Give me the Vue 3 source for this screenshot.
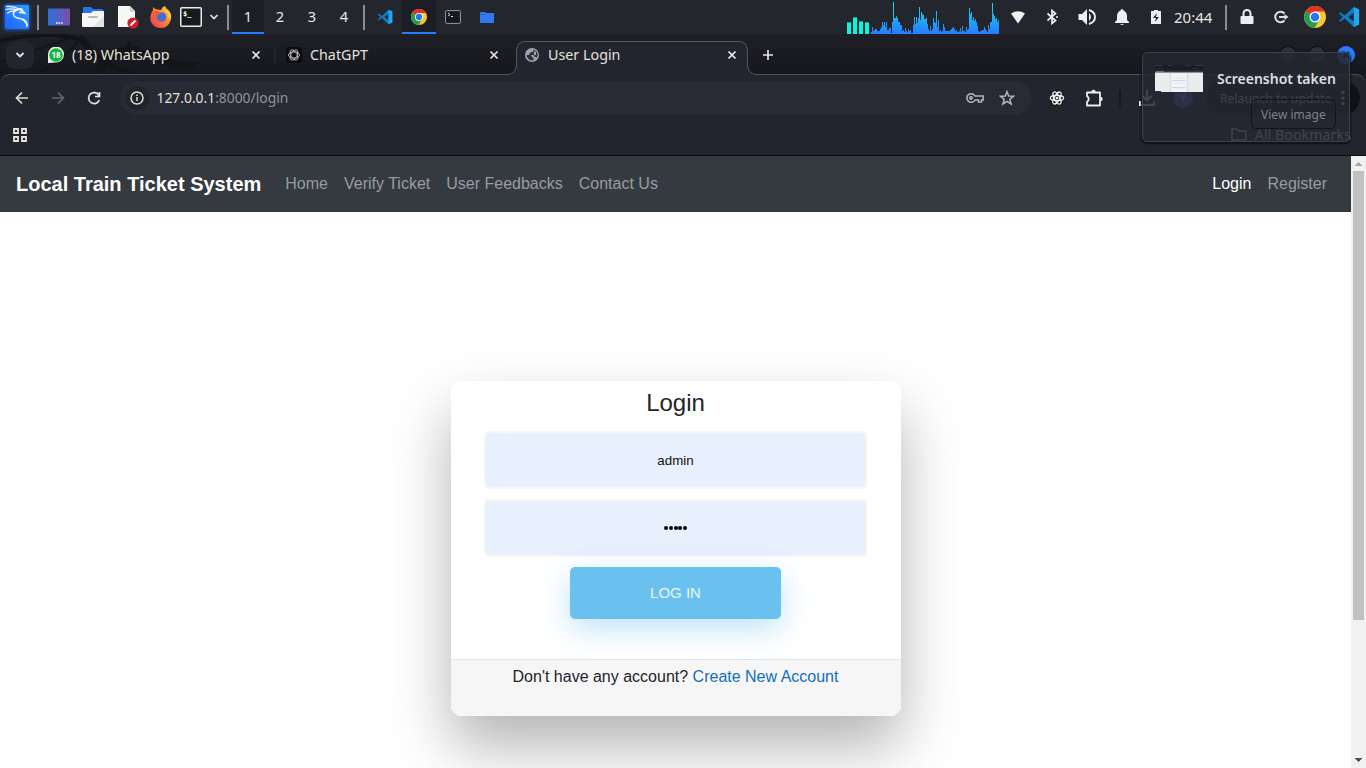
<script setup>
const cores = [12, 17, 13, 12]
const graph = [
  2, 7, 3, 4, 5, 5, 3, 3, 3, 5, 7, 12, 9, 12, 7, 12, 4, 4, 6, 6, 1, 12, 32, 16, 16, 18, 16, 12, 12, 9, 9,
  3, 4, 2, 6, 3, 2, 5, 3, 4, 1, 1, 9, 17, 10, 17, 11, 16, 27, 14, 22, 20, 19, 15, 15, 16, 10, 5, 3, 8, 3, 5,
  16, 12, 11, 23, 7, 14, 3, 4, 2, 3, 10, 7, 3, 3, 3, 3, 3, 4, 5, 6, 7, 5, 3, 4, 2, 2, 3, 6, 2, 8, 3, 3, 2, 7,
  4, 5, 26, 20, 22, 14, 17, 13, 15, 12, 8, 3, 2, 3, 3, 4, 4, 7, 5, 3, 2, 9, 5, 12, 12, 31, 20, 18, 15, 16, 12, 14
]
const graphPath = 'M0 34' + graph.map((h, i) => `V${34 - h}H${i + 1}`).join('') + 'V34Z'
const links = ['Home', 'Verify Ticket', 'User Feedbacks', 'Contact Us']
</script>

<template>
  <div class="screen">
    <svg class="defs" width="0" height="0">
      <defs>
        <linearGradient id="load" x1="0" y1="0" x2="0" y2="34" gradientUnits="userSpaceOnUse"><stop stop-color="#13e9e8" /><stop offset="1" stop-color="#277bff" /></linearGradient>
        <linearGradient id="desk" x1="0" y1="0" x2="1" y2="0"><stop stop-color="#2d70dd" /><stop offset="1" stop-color="#7950a6" /></linearGradient>
        <linearGradient id="fox" x1="1" y1="0" x2="0" y2="1"><stop stop-color="#ffe34a" /><stop offset=".45" stop-color="#ff8a2a" /><stop offset="1" stop-color="#f02b61" /></linearGradient>
        <linearGradient id="kali" x1="0" y1="1" x2="1" y2="0"><stop stop-color="#1e62ff" /><stop offset="1" stop-color="#2d9dff" /></linearGradient>
      </defs>
      <symbol id="chrome" viewBox="0 0 22 22">
        <circle cx="11" cy="11" r="11" fill="#fbc52d" />
        <path d="M11 11 1.500 5.500A11 11 0 0 1 20.500 5.500H11Z" fill="#df3128" />
        <path d="M11 11 1.500 5.500A11 11 0 0 0 10.500 22L15.700 13.500Z" fill="#249d50" />
        <circle cx="11" cy="11" r="5.500" fill="#fff" /><circle cx="11" cy="11" r="4.300" fill="#2677ef" />
      </symbol>
      <symbol id="vscode" viewBox="0 0 24 24">
        <path d="M17.300 1 23 3.700v16.600L17.300 23l-10-9.400-4.600 3.600L1 16l4.300-4L1 8l1.700-1.200 4.600 3.600ZM17.300 7 11 12l6.300 5Z" fill="#087ecb" fill-rule="evenodd" />
        <path d="M17.300 1 23 3.700v16.600L17.300 23Z" fill="#25a5ee" />
      </symbol>
    </svg>

    <header class="panel">
      <span class="cell"><svg width="34" height="34" viewBox="0 0 34 34"><rect x="2" y="2" width="30" height="30" rx="5" fill="#164995" opacity=".25" /><rect x="3.500" y="3.500" width="27" height="27" rx="4" fill="#1b5ac8" opacity=".5" /><rect x="5" y="5" width="24" height="24" rx="2" fill="url(#kali)" /><g fill="none" stroke="#f4f9ff" stroke-linecap="round"><path d="M6.500 6.500Q14 6 20 9.500M6 9.500Q12 8 17 10M7.500 13Q11 10.500 16 11" stroke-width="1.200" /><path d="M19.500 9.500q3 .5 5 3.500-3-.8-5-.5M17 10q-4 1-3.500 4.500.5 3.200 6 4 5 .5 6.500 3.500 1.200 2.200 1 4M17 10q3-2 5-.5" stroke-width="1.700" /><path d="M22 19.500q3 1.500 3.500 3.500" stroke-width="1" /></g></svg></span>
      <i class="divider"></i>
      <span class="cell"><svg width="22" height="18"><rect y=".5" width="22" height="17" rx="1" fill="url(#desk)" /><path d="M8 15h1.500m1 0H12m1 0h1.500" stroke="#fff" stroke-width="1.300" /></svg></span>
      <span class="cell"><svg width="24" height="22"><path d="M2 2q0-1 1-1h7l2 2h9q1 0 1 1v8H2Z" fill="#2673e8" /><path d="M1 7h9l2-2h11v15q0 1-1 1H2q-1 0-1-1Z" fill="#f5f5f4" /><path d="M12 21 23 10v11Z" fill="#e3e3e2" /><rect x="7" y="10" width="10" height="2" rx="1" fill="#b9b9b9" /></svg></span>
      <span class="cell"><svg width="24" height="24"><path d="M3 1h12l5 5v15q0 1-1 1H3Z" fill="#f7f7f7" /><path d="m14 1 6 6h-5Z" fill="#ccc" /><circle cx="18" cy="18" r="5.600" fill="#d21e26" /><path d="m15.500 20.500 5-5" stroke="#fff" stroke-width="1.800" /></svg></span>
      <span class="cell"><svg width="24" height="24"><path d="M12 5q1-3 4-4 1 3 4 5 4 5 1 11-3 6-9 6Q5 23 2 17 0 11 4 5l0-3q2 2 4 2.500Z" fill="url(#fox)" /><circle cx="12.500" cy="12" r="4.800" fill="#486bd9" /><path d="M4 6q5-1 8 2.500l-3 1q-3 2 0 5-5 0-5-4Z" fill="#f55936" /><path d="M15 6q5 1 4 7l3-1q0-5-4-8Z" fill="#ffc643" /></svg></span>
      <span class="cell wide"><svg width="22" height="20"><rect x=".75" y=".75" width="20.500" height="18.500" rx="1" fill="#18191a" stroke="#ececec" stroke-width="1.500" /><text x="3" y="9" font-family="DejaVu Sans Mono, monospace" font-weight="700" font-size="7" fill="#fff">$_</text></svg><svg width="10" height="8"><path d="m1.500 2 3.500 3.500L8.500 2" fill="none" stroke="#e5e5e5" stroke-width="1.700" /></svg></span>
      <i class="divider"></i>
      <span class="work on">1</span><span class="work">2</span><span class="work">3</span><span class="work">4</span>
      <i class="divider"></i>
      <span class="cell"><svg width="16" height="16"><use href="#vscode" /></svg></span>
      <span class="cell on"><svg width="16" height="16"><use href="#chrome" /></svg></span>
      <span class="cell"><svg width="16" height="14"><rect x=".6" y=".6" width="14.800" height="12.800" rx="1" fill="#17181b" stroke="#999" /><path d="m3 3 2 1.500L3 6m3 .5h2" fill="none" stroke="#ddd" /></svg></span>
      <span class="cell"><svg width="16" height="14"><path d="M1 3q0-1 1-1h4l1 1h7q1 0 1 1v8q0 1-1 1H2q-1 0-1-1Z" fill="#3279ef" /><path d="M1 4.500h5l1-1" fill="none" stroke="#1d5dc8" stroke-width=".7" /></svg></span>
      <div class="meters">
        <i v-for="(c, i) in cores" :key="i" class="core" :style="{ height: c + 'px' }"></i>
      </div>
      <svg class="graph" width="128" height="34" shape-rendering="crispEdges"><path :d="graphPath" fill="url(#load)" /></svg>
      <span class="cell"><svg width="16" height="14"><path d="M1 3.500Q8-1 15 3.500L8 13.500Z" fill="#f0f0ee" /></svg></span>
      <span class="cell"><svg width="14" height="18"><path d="m2.500 5.500 8 7L7 15.500v-13l3.500 3-8 7" fill="none" stroke="#eee" stroke-width="1.700" /><circle cx="12" cy="9" r="1" fill="#eee" /></svg></span>
      <span class="cell vol"><svg width="20" height="18"><path d="M1.500 6H5l5-5v16l-5-5H1.500Z" fill="#eee" /><path d="M12 5q4 4 0 8Z" fill="#eee" /><path d="M12 2q6 2 6 7t-6 7" fill="none" stroke="#eee" stroke-width="1.900" /></svg></span>
      <span class="cell"><svg width="16" height="18"><path d="M8 1q1.500 0 1.500 1.500Q13 4 13 8v4l2 2v1H1v-1l2-2V8q0-4 3.500-5.500Q6.500 1 8 1ZM6 16h4q-2 2-4 0Z" fill="#eee" /></svg></span>
      <span class="cell"><svg width="12" height="16"><path d="M1 2h3V1h4v1h3v13H1Z" fill="#eee" /><path d="M7 4 3 9h3l-1 4 4-5H6Z" fill="#24262d" /></svg></span>
      <span class="clock">20:44</span>
      <i class="divider"></i>
      <span class="cell"><svg width="14" height="16"><path d="M3.500 7V4.500a3.500 3.500 0 0 1 7 0V7" fill="none" stroke="#eee" stroke-width="2" /><rect x=".5" y="7" width="13" height="8" rx="1" fill="#eee" /></svg></span>
      <span class="cell"><svg width="16" height="14"><path d="M11.500 3.500A5.300 5.300 0 1 0 11.500 10.500" fill="none" stroke="#ddd" stroke-width="2" /><path d="M6 7h6" stroke="#ddd" stroke-width="2" /><path d="m11.500 4 4 3-4 3Z" fill="#ddd" /></svg></span>
      <span class="cell"><svg width="22" height="22"><use href="#chrome" /></svg></span>
      <span class="cell"><svg width="22" height="22"><use href="#vscode" /></svg></span>
    </header>

    <section class="browser">
      <div class="tabs">
        <svg class="dragon" width="220" height="40"><g fill="none" stroke="#131418"><path d="M0 7Q28 0 54 1T90 15Q110 36 134 38" stroke-width="4" /><path d="M0 28Q45 13 76 2M38 39Q62 28 81 4" stroke-width="2" /><path d="M80 2 97 24" stroke-width="5" /></g><path d="M94 39q6-24 31-26l5-6 2 6 8-1-3 4 17 1-6 2 27 7q18 5 26 1l-8 7-12-2 1 3q-22-3-35-11-37-8-44 15Z" fill="#131418" /></svg>
        <button class="search"><svg width="10" height="8"><path d="m1.500 2 3.500 3.500L8.500 2" fill="none" stroke="#e6e4e1" stroke-width="1.800" /></svg></button>
        <div class="tab first">
          <svg width="16" height="16"><path d="M0 16V7A8 8 0 1 1 8 15.500Z" fill="#eee" /><circle cx="8" cy="8" r="6.800" fill="#14b83d" /><text x="8" y="11" text-anchor="middle" font-family="Noto Sans, sans-serif" font-weight="700" font-size="8" fill="#fff">18</text></svg>
          <span>(18) WhatsApp</span><svg class="close" width="10" height="10"><path d="m1.500 1.500 7 7m0-7-7 7" stroke="#e6e4e1" stroke-width="1.700" /></svg>
        </div>
        <i class="tabsep"></i>
        <div class="tab second">
          <svg width="16" height="16"><rect width="16" height="16" rx="3" fill="#0b0c0d" /><g fill="none" stroke="#c9c9c9" stroke-width=".85"><ellipse v-for="a in 3" :key="a" cx="8" cy="8" rx="5.600" ry="3.100" :transform="`rotate(${a * 60} 8 8)`" /></g></svg>
          <span>ChatGPT</span><svg class="close" width="10" height="10"><path d="m1.500 1.500 7 7m0-7-7 7" stroke="#e6e4e1" stroke-width="1.700" /></svg>
        </div>
        <div class="tab active">
          <svg class="shape" width="252" height="34"><path d="M0 33.500Q10 33.500 10.500 24V10Q10.500.5 20 .5H232Q241.500.5 241.500 10V24Q242 33.500 252 33.500V34H0Z" fill="#23252e" /><path d="M0 33.500Q10 33.500 10.500 24V10Q10.500.5 20 .5H232Q241.500.5 241.500 10V24Q242 33.500 252 33.500" fill="none" stroke="#55565b" /></svg>
          <svg width="14" height="14"><circle cx="7" cy="7" r="7" fill="#a1a4b0" /><path d="M1.500 7H5q2 0 2 1.500v1h1.500v2.800Q5 13 3 10.500 1.500 9 1.500 7ZM8.500 1.500v1q0 1.500-1.500 1.500H5.500v1.500H4V7h4q1.500 0 1.500 2H11l1 .8Q13.500 6 11.500 3.500 10 1.800 8.500 1.500Z" fill="#30333d" fill-rule="evenodd" /><path d="M9 3.500h2V7H9Z" fill="#a1a4b0" /></svg>
          <span>User Login</span><svg class="close" width="10" height="10"><path d="m1.500 1.500 7 7m0-7-7 7" stroke="#eee" stroke-width="1.700" /></svg>
        </div>
        <svg class="plus" width="12" height="12"><path d="M6 1v10M1 6h10" stroke="#e6e4e1" stroke-width="1.700" /></svg>
        <div class="winbtns"><i></i><i></i><i class="quit"><svg width="8" height="8"><path d="m1 1 6 6m0-6L1 7" stroke="#111d36" stroke-width="1.500" /></svg></i></div>
      </div>

      <div class="toolbar">
        <svg class="tool" width="14" height="14"><path d="M13 7H2m5-5.500L1.500 7 7 12.500" fill="none" stroke="#e0ded9" stroke-width="1.700" /></svg>
        <svg class="tool" width="14" height="14"><path d="M1 7h11M7 1.500 12.500 7 7 12.500" fill="none" stroke="#66676c" stroke-width="1.600" /></svg>
        <svg class="tool" width="14" height="14"><path d="M12 4.500A5.500 5.500 0 1 0 12.300 9M12.500 1v4.500H8" fill="none" stroke="#e5e3df" stroke-width="1.700" /></svg>
        <div class="address">
          <i class="info"><svg width="14" height="14"><circle cx="7" cy="7" r="6" fill="none" stroke="#deddda" stroke-width="1.500" /><path d="M7 6v4M7 3.500v1.400" stroke="#deddda" stroke-width="1.500" /></svg></i>
          <span class="url">127.0.0.1<b>:8000/login</b></span>
          <svg class="key" width="18" height="12"><g fill="none" stroke="#b7b6b5" stroke-width="1.500"><path d="M9 4A4.300 4.300 0 1 0 9 8h3.500v2h3V8h1.700V4Z" /><circle cx="5" cy="6" r="1.200" /></g></svg>
          <svg width="16" height="16"><path d="m8 1.700 1.700 4.400 4.800.2-3.700 3 1.300 4.700L8 11.300 3.900 14l1.300-4.700-3.700-3 4.800-.2Z" fill="none" stroke="#b7b6b5" stroke-width="1.500" /></svg>
        </div>
        <svg class="react" width="16" height="16"><rect width="16" height="16" fill="#202126" /><g fill="none" stroke="#f0f0f0" stroke-width="1.200"><ellipse v-for="r in 3" :key="r" cx="8" cy="8" rx="6.700" ry="2.700" :transform="`rotate(${r * 60} 8 8)`" /></g><circle cx="8" cy="8" r="1.300" fill="#fff" /></svg>
        <svg class="puzzle" width="18" height="18"><path d="M2 3.500h13v13H2v-3.500q3.500-3 0-6Z" fill="none" stroke="#eee" stroke-width="1.800" stroke-linejoin="round" /><path d="M6.300 3a2.200 2.200 0 0 1 4.400 0ZM15.500 7.800a2.200 2.200 0 0 1 0 4.400Z" fill="#eee" /></svg>
        <i class="toolsep"></i>
        <svg class="download" width="18" height="18"><path d="M9 1v10M4.500 7 9 11.500 13.500 7M2 12v4h14v-4" fill="none" stroke="#eee" stroke-width="2" /></svg>
        <i class="profile">Y</i>
        <div class="update"><span>Relaunch to update</span><svg width="4" height="16"><circle cx="2" cy="2.500" r="1.700" /><circle cx="2" cy="8" r="1.700" /><circle cx="2" cy="13.500" r="1.700" /></svg></div>
      </div>

      <div class="bookmarks">
        <svg width="14" height="14"><path d="M1 1h4v4H1ZM9 1h4v4H9ZM1 9h4v4H1ZM9 9h4v4H9Z" fill="none" stroke="#e8e6e2" stroke-width="1.800" /></svg>
        <div class="all"><svg width="16" height="13"><path d="M1 1h5l2 2h7v9H1Z" fill="none" stroke="#ddd" stroke-width="1.500" /></svg><span>All Bookmarks</span></div>
      </div>
    </section>

    <div class="viewport">
      <div class="page">
        <nav class="navbar">
          <a class="brand">Local Train Ticket System</a>
          <a v-for="l in links" :key="l" class="link">{{ l }}</a>
          <a class="link current">Login</a><a class="link">Register</a>
        </nav>
        <main class="content">
          <form class="card">
            <h2>Login</h2>
            <div class="field">admin</div>
            <div class="field"><span class="dots"><i v-for="d in 5" :key="d"></i></span></div>
            <div class="submit">LOG IN</div>
            <footer>Don't have any account? <a>Create New Account</a></footer>
          </form>
        </main>
      </div>
      <div class="scroll"><svg width="15" height="15" shape-rendering="crispEdges"><path d="M4 10 7.500 6 11 10Z" fill="#a3a3a3" /></svg><i class="thumb"></i><svg width="15" height="15" shape-rendering="crispEdges"><path d="M4 5h7L7.500 9Z" fill="#505050" /></svg></div>
    </div>

    <aside class="notice">
      <svg class="shot" width="48" height="27"><rect width="48" height="27" fill="#eaecee" /><rect width="48" height="6" fill="#1b1d24" /><rect y="5.500" width="48" height="2" fill="#34383f" /><path d="M0 .5h7M13 .5h4M30 .5h5M40 .5h8" stroke="#33436b" stroke-width=".7" /><path d="M1 3.500h8M37 3.500h6" stroke="#30323b" stroke-width=".8" /><path d="M1 6.500h8" stroke="#888" stroke-width=".7" /><path d="M15.500 8v19M32.500 8v19" stroke="#d9dadd" stroke-width="1.500" /><rect x="16.500" y="9" width="15" height="18" fill="#f4f4f6" /><path d="M18 13h12M18 18h12M18 23h12" stroke="#dfe4ed" stroke-width="1.200" /><path d="M17 15.500h14M17 22.500h14" stroke="#c5daf0" stroke-width="1.200" /><path d="M0 26.500h6" stroke="#333" /></svg>
      <strong>Screenshot taken</strong>
      <div class="view">View image</div>
    </aside>
  </div>
</template>

<style>
html, body { margin: 0; overflow: hidden; }
</style>

<style scoped>
* { box-sizing: border-box; }
svg { display: block; flex: none; }
.screen { position: relative; width: 1366px; height: 768px; overflow: hidden; display: flex; flex-direction: column; background: #fff; font-family: "Noto Sans", sans-serif; }
.defs { position: absolute; }
.panel { height: 34px; flex: none; display: flex; align-items: center; background: #24262d; color: #e7e7e8; font-size: 15px; }
.cell { width: 34px; height: 34px; flex: none; display: flex; align-items: center; justify-content: center; }
.wide { width: 46px; justify-content: flex-start; padding-left: 2px; gap: 7px; }
.vol { width: 36px; }
.on { background: #1c1e25; border-bottom: 2px solid #277bff; }
.cell.on svg { margin-top: 2px; }
.divider { width: 8px; height: 25px; flex: none; display: flex; justify-content: center; }
.divider::before { content: ""; width: 2px; height: 25px; background: #8c8d90; }
.work { width: 32px; height: 34px; line-height: 33px; text-align: center; flex: none; font-size: 14.600px; }
.meters { margin-left: 343px; width: 24px; height: 34px; display: flex; align-items: flex-end; gap: 2px; flex: none; }
.core { width: 4px; background: #05f8dc; border-top: 1px solid #07a997; }
.graph { margin-right: 2px; }
.clock { width: 49px; padding-left: 1px; line-height: 32px; flex: none; }
.browser { height: 122px; flex: none; background: #191a1f; border-bottom: 1px solid #08090c; color: #e3e1dd; font-size: 14.300px; }
.tabs { position: relative; height: 40px; display: flex; align-items: flex-start; padding: 7px 0 0 6px; background: linear-gradient(#1f2025, #16171c); }
.dragon { position: absolute; left: 0; top: 0; }
.search { position: relative; width: 28px; height: 28px; border: 0; padding: 0; border-radius: 9px; background: #23252e; display: flex; align-items: center; justify-content: center; }
.tab { position: relative; height: 28px; display: flex; align-items: center; gap: 8px; }
.tab span { position: relative; line-height: 28px; white-space: nowrap; }
.close { margin-left: auto; position: relative; }
.first { margin-left: 14px; width: 213px; }
.tabsep { width: 2px; height: 16px; margin: 6px 10px 0 13px; background: #23252e; }
.second { width: 213px; }
.active { z-index: 1; width: 232px; margin-left: 17px; padding: 0 11px 0 9px; gap: 9px; }
.active > svg:not(.shape) { position: relative; }
.active > svg.shape { position: absolute; left: -10px; top: 0; }
.plus { margin: 8px 0 0 14px; }
.winbtns { display: flex; gap: 13px; margin: 6px 13px 0 auto; }
.winbtns i { width: 16px; height: 16px; border-radius: 50%; background: #30323d; box-shadow: 0 0 0 1px #0b0c10; }
.winbtns .quit { width: 18px; height: 18px; margin: -1px -2px 0 -1px; background: #277bff; box-shadow: none; display: flex; align-items: center; justify-content: center; }
.toolbar { height: 48px; display: flex; align-items: center; padding: 0 6px 0 15px; background: #23252e; border-top: 1px solid #515257; border-radius: 10px 10px 0 0; }
.toolbar > * { margin-top: -1px; }
.tool { margin-right: 22px; }
.address { width: 911px; height: 34px; margin-left: -3px; display: flex; align-items: center; padding: 0 16px 0 5px; border-radius: 17px; background: #282a35; flex: none; }
.info { width: 24px; height: 24px; border-radius: 50%; background: #22242c; display: flex; align-items: center; justify-content: center; margin-right: 7px; }
.url { font-size: 13.850px; line-height: 32px; padding-left: .5px; }
.url b { font-weight: 400; color: #939397; }
.key { margin: 0 15px 0 auto; }
.react { margin-left: 18px; }
.puzzle { margin-left: 20px; }
.toolsep { width: 2px; height: 16px; margin-left: 16px; background: #15171d; }
.download { margin-left: 17px; }
.profile { width: 20px; height: 20px; margin-left: 17px; border-radius: 50%; background: #5360c9; font: 11px/20px "Noto Sans", sans-serif; text-align: center; color: #ddd; }
.update { width: 155px; height: 34px; margin-left: auto; border-radius: 17px; background: #101216; display: flex; align-items: center; padding-left: 15px; gap: 9px; font-size: 12.200px; white-space: nowrap; color: #ddd; }
.update span { width: 112px; }
.update svg { fill: #ddd; }
.bookmarks { height: 33px; display: flex; align-items: center; background: #23252e; padding: 0 15px 8px 13px; }
.all { margin-left: auto; display: flex; align-items: center; gap: 8px; font-size: 14.300px; line-height: 20px; }
.viewport { height: 612px; flex: none; display: flex; }
.page { width: 1351px; font-family: "Liberation Sans", Arial, sans-serif; background: #fff; }
.navbar { height: 56px; display: flex; align-items: center; padding: 0 16px; background: #343a40; border-bottom: 1px solid #30353b; font-size: 16px; line-height: 24px; color: #999c9f; }
.brand { color: #fff; font-weight: 700; font-size: 20px; margin-right: 16px; }
.link { padding: 0 8px; }
.current { color: #fff; margin-left: auto; }
.content { height: 556px; padding-top: 169px; overflow: hidden; }
.card { width: 450px; height: 335px; margin: 0 auto; border-radius: 10px; background: #fff; box-shadow: 0 30px 60px rgba(0,0,0,.3); display: flex; flex-direction: column; align-items: center; color: #212529; }
h2 { margin: 0; height: 50px; padding-top: 7px; font-size: 24px; line-height: 29px; font-weight: 400; }
.field { width: 382.500px; height: 58px; margin-bottom: 10px; border: 2px solid #f5f5f6; border-radius: 5px; background: #e8effd; color: #111; font-size: 13.333px; line-height: 55px; text-align: center; display: flex; align-items: center; justify-content: center; flex: none; }
.dots { display: flex; gap: .7px; }
.dots i { width: 4px; height: 4px; border-radius: 50%; background: #050505; }
.submit { width: 211px; height: 52px; border-radius: 5px; background: #6ac1ef; box-shadow: 0 10px 30px rgba(95,186,233,.4); color: #e9f6fd; font-size: 15px; line-height: 52px; text-align: center; }
footer { width: 450px; height: 57px; margin-top: auto; border-top: 1px solid #dce8f1; border-radius: 0 0 10px 10px; background: #f6f6f6; font-size: 16px; line-height: 24px; padding-top: 5px; text-align: center; }
footer a { color: #136ebc; }
.scroll { width: 15px; background: #f1f1f1; display: flex; flex-direction: column; }
.scroll svg:last-child { margin-top: auto; }
.thumb { width: 11px; height: 449px; margin-left: 2px; background: #c1c1c1; }
.notice { position: absolute; z-index: 3; left: 1142px; top: 52px; width: 208px; height: 90px; border: 1px solid #41434c; box-shadow: 0 1px 2px 1px #0f1116; border-radius: 5px; background: rgba(37,39,49,.85); color: #dedfe1; display: grid; grid-template-columns: 62px 1fr; grid-template-rows: 46px 30px; padding: 0 14px 0 12px; }
.shot { margin-top: 12px; }
.notice strong { padding-top: 14px; font-size: 14px; line-height: 24px; font-weight: 600; white-space: nowrap; }
.view { grid-column: 2; justify-self: end; width: 85px; height: 30px; border: 1px solid #13151b; border-radius: 5px; background: rgba(37,39,48,.15); color: #808187; font-size: 12px; line-height: 29px; text-align: center; }
</style>
